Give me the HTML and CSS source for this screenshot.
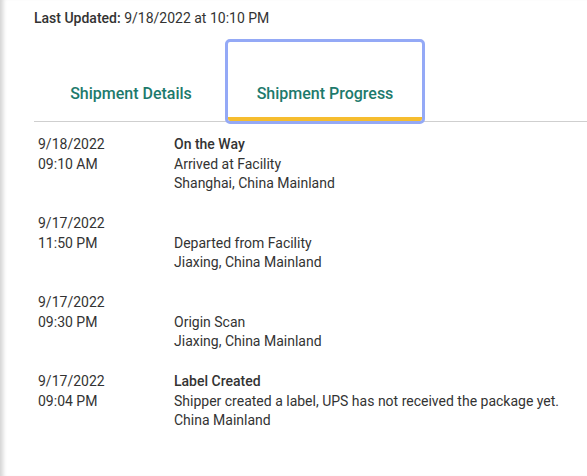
FILE: index.html
```html
<!DOCTYPE html>
<html>
<head>
<meta charset="utf-8">
<link rel="stylesheet" href="styles.css">
</head>
<body>
<div class="page">
  <p class="updated"><b>Last Updated:</b> 9/18/2022 at 10:10 PM</p>
  <div class="tabs">
    <div class="tab">Shipment Details</div>
    <div class="tab active">Shipment Progress</div>
  </div>
  <div class="events">
    <div class="event">
      <div class="when">9/18/2022<br>09:10 AM</div>
      <div class="what"><b>On the Way</b><br>Arrived at Facility<br>Shanghai, China Mainland</div>
    </div>
    <div class="event">
      <div class="when">9/17/2022<br>11:50 PM</div>
      <div class="what"><br>Departed from Facility<br>Jiaxing, China Mainland</div>
    </div>
    <div class="event">
      <div class="when">9/17/2022<br>09:30 PM</div>
      <div class="what"><br>Origin Scan<br>Jiaxing, China Mainland</div>
    </div>
    <div class="event">
      <div class="when">9/17/2022<br>09:04 PM</div>
      <div class="what"><b>Label Created</b><br>Shipper created a label, UPS has not received the package yet.<br>China Mainland</div>
    </div>
  </div>
</div>
</body>
</html>
```

FILE: styles.css
```css
html, body {
  margin: 0;
  padding: 0;
  background: #fff;
}
body {
  font-family: Roboto, "Liberation Sans", sans-serif;
  color: #333;
  font-size: 14px;
  width: 587px;
  height: 476px;
  overflow: hidden;
}
.page {
  height: 476px;
  padding-left: 34px;
  box-shadow: inset 6px 0 4px -3px #d4d4d4;
  box-sizing: border-box;
}
.updated {
  margin: 0;
  padding-top: 9px;
  line-height: 18px;
}
.updated b {
  font-weight: 500;
}
.tabs {
  display: flex;
  margin-top: 15px;
  border-bottom: 1px solid #cfcfcf;
}
.tab {
  width: 194px;
  height: 79px;
  box-sizing: border-box;
  display: flex;
  align-items: center;
  justify-content: center;
  padding-top: 24px;
  font-size: 16px;
  font-weight: 500;
  color: #1d7a6c;
}
.tab.active {
  border-bottom: 4px solid #f6bd2f;
  padding-top: 28px;
  outline: 3px solid #94a9f6;
  outline-offset: 0;
  border-radius: 2px;
}
.events {
  padding-top: 13px;
}
.event {
  display: flex;
  line-height: 19.5px;
  margin-bottom: 20.5px;
}
.when {
  width: 136px;
  padding-left: 4px;
}
.what b {
  font-weight: 500;
}
```
